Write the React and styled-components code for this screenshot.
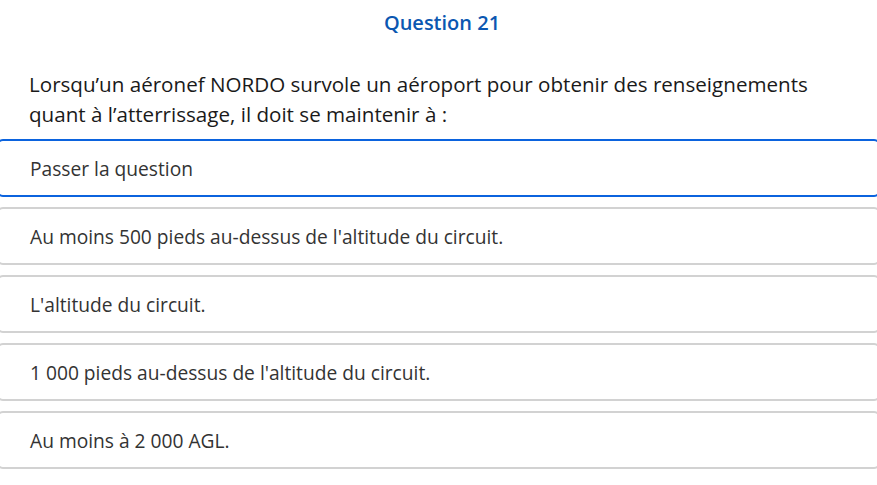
import React from 'react';
import styled, { createGlobalStyle } from 'styled-components';

const GlobalStyle = createGlobalStyle`
  html, body {
    margin: 0;
    padding: 0;
    background: #ffffff;
    overflow: hidden;
  }
  body {
    font-family: "Open Sans", "Noto Sans", sans-serif;
  }
`;

const options = [
  { label: 'Passer la question', active: true },
  { label: "Au moins 500 pieds au-dessus de l'altitude du circuit." },
  { label: "L'altitude du circuit." },
  { label: "1 000 pieds au-dessus de l'altitude du circuit." },
  { label: 'Au moins à 2 000 AGL.' },
];

const App = () => {
  return (
    <Page>
      <GlobalStyle />
      <Title>Question 21</Title>
      <Prompt>
        Lorsqu’un aéronef NORDO survole un aéroport pour obtenir des renseignements
        quant à l’atterrissage, il doit se maintenir à :
      </Prompt>
      <OptionList>
        {options.map((o) => (
          <Option key={o.label} active={o.active}>
            {o.label}
          </Option>
        ))}
      </OptionList>
    </Page>
  );
};

export default App;

const Page = styled.div`
  width: 877px;
  height: 485px;
  overflow: hidden;
  box-sizing: border-box;
`;

const Title = styled.h2`
  margin: 0;
  padding: 10px 0 0 7px;
  height: 26px;
  line-height: 26px;
  text-align: center;
  font-size: 20px;
  font-weight: 600;
  color: #0b57b1;
`;

const Prompt = styled.p`
  margin: 0;
  padding: 33px 58px 0 29px;
  font-size: 20.6px;
  line-height: 30px;
  color: #1a1a1a;
`;

const OptionList = styled.div`
  display: flex;
  flex-direction: column;
  gap: 10px;
  margin: 10px -4px 0 -4px;
`;

const Option = styled.button`
  display: flex;
  align-items: center;
  height: 58px;
  box-sizing: border-box;
  padding: 0 0 0 32px;
  border: 2px solid ${(p) => (p.active ? '#0b63de' : '#d2d2d2')};
  border-radius: 7px;
  background: #ffffff;
  font-family: "Open Sans", "Noto Sans", sans-serif;
  font-size: 19.2px;
  color: #333333;
  text-align: left;
  cursor: pointer;
`;
